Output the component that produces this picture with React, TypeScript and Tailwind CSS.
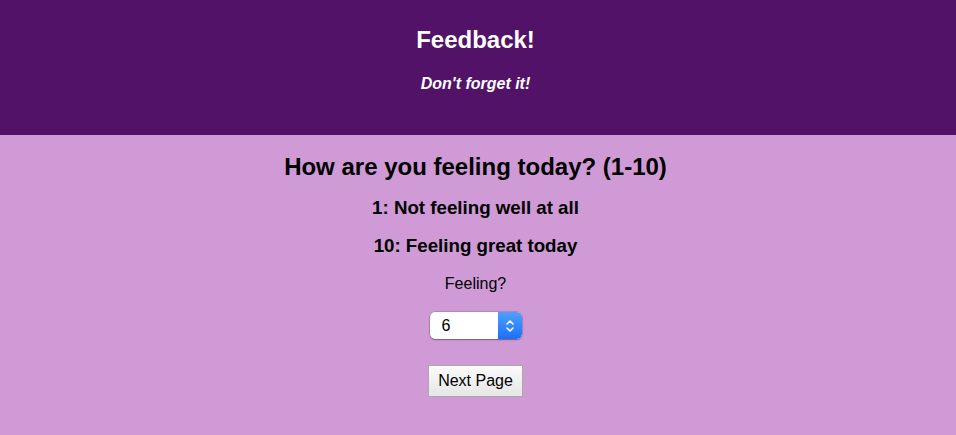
export default function App() {
  return (
    <div className="min-h-[435px] w-full bg-[#cf9ad5] font-['Liberation_Sans',Arial,sans-serif] text-black">
      {/* Header */}
      <header className="flex h-[135px] flex-col items-center bg-[#521268] pr-[5px] pt-[26px] text-white">
        <h2 className="text-[24px] font-bold leading-[28px]">Feedback!</h2>
        <p className="mt-[21px] text-[16px] font-bold italic leading-[18px]">Don't forget it!</p>
      </header>

      {/* Form */}
      <main className="flex flex-col items-center pb-[38px] pr-[5px]">
        <h2 className="mt-[18px] text-[24px] font-bold leading-[28px]">How are you feeling today? (1-10)</h2>
        <h3 className="mt-[16px] text-[18.72px] font-bold leading-[22px]">1: Not feeling well at all</h3>
        <h3 className="mt-[16px] text-[18.72px] font-bold leading-[22px]">10: Feeling great today</h3>
        <p className="mt-[18px] text-[16px] leading-[18px]">Feeling?</p>

        <div className="mt-[19px] flex h-[27px] w-[92px] overflow-hidden rounded-[5px] bg-white shadow-[0_0_0_0.5px_rgba(0,0,0,0.25),0_1px_1.5px_rgba(0,0,0,0.3)]">
          <span className="flex-1 pl-[12px] text-[16px] leading-[27px]">6</span>
          <span className="flex w-[24px] items-center justify-center rounded-r-[5px] bg-gradient-to-b from-[#4fa0fd] to-[#1a6ffb]">
            <svg width="10" height="16" viewBox="0 0 10 16" fill="none" stroke="white" strokeWidth="1.6" strokeLinecap="round" strokeLinejoin="round">
              <path d="M2 6 L5 3 L8 6" />
              <path d="M2 10 L5 13 L8 10" />
            </svg>
          </span>
        </div>

        <button className="mt-[26px] h-[32px] w-[95px] border border-[#a9a9a9] bg-gradient-to-b from-[#fbfbfb] to-[#e6e6e6] text-[16px] leading-[30px]">
          Next Page
        </button>
      </main>
    </div>
  )
}
